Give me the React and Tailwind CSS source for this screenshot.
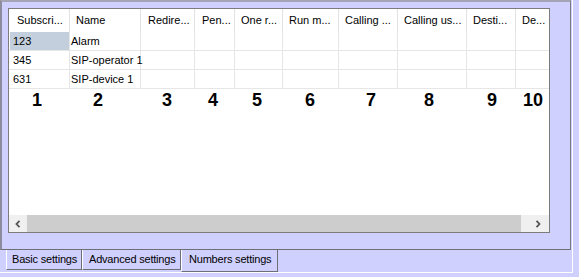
import React from 'react';

const columns = [
  { label: 'Subscri...', width: 'w-[61px]', head: 'pl-[8px]' },
  { label: 'Name', width: 'w-[71px]', head: 'pl-[6px]' },
  { label: 'Redire...', width: 'w-[54px]', head: 'pl-[7px]' },
  { label: 'Pen...', width: 'w-[40px]', head: 'pl-[7px]' },
  { label: 'One r...', width: 'w-[48px]', head: 'pl-[6px]' },
  { label: 'Run m...', width: 'w-[56px]', head: 'pl-[6px]' },
  { label: 'Calling ...', width: 'w-[59px]', head: 'pl-[6px]' },
  { label: 'Calling us...', width: 'w-[69px]', head: 'pl-[6px]' },
  { label: 'Desti...', width: 'w-[49px]', head: 'pl-[6px]' },
  { label: 'De...', width: 'w-[33px]', head: 'pl-[6px]' },
];

const rows = [
  { number: '123', name: 'Alarm', selected: true },
  { number: '345', name: 'SIP-operator 1' },
  { number: '631', name: 'SIP-device 1' },
];

const Chevron = ({ left }) => (
  <svg width="6" height="8" viewBox="0 0 6 8" className="block">
    <path
      d={left ? 'M4.5 0.8 L1.5 4 L4.5 7.2' : 'M1.5 0.8 L4.5 4 L1.5 7.2'}
      fill="none"
      stroke="#555555"
      strokeWidth="1.8"
    />
  </svg>
);

const App = () => {
  return (
    <div
      className="w-[579px] h-[277px] bg-[#d0d0ff] overflow-hidden text-[11px] text-black"
      style={{ fontFamily: '"Liberation Sans", Arial, sans-serif' }}
    >
      <div className="w-[573px] h-[273px] border-r border-b border-white flex flex-col">
        {/* Tab page */}
        <div className="w-[571px] h-[251px] border-t-2 border-l-2 border-t-[#a4a4b4] border-l-[#8c8c9c] border-r border-b border-r-[#7a7a82] border-b-[#6e6e78] pt-[6px] pl-[6px] pr-[20px] pb-[16px]">
          <div className="w-full h-full border border-[#7c7c7c] bg-white flex flex-col">
            {/* Grid */}
            <div className="flex-1">
              <div className="flex h-[23px]">
                {columns.map((col, i) => (
                  <div
                    key={col.label}
                    className={`${col.width} ${col.head} shrink-0 flex items-center whitespace-nowrap overflow-hidden ${
                      i < columns.length - 1 ? 'border-r border-[#e2e2e2]' : ''
                    }`}
                  >
                    {col.label}
                  </div>
                ))}
              </div>
              {rows.map((row) => (
                <div key={row.number} className="flex h-[19px] border-b border-[#e6e6e6]">
                  {columns.map((col, i) => (
                    <div
                      key={col.label}
                      className={`${col.width} shrink-0 flex items-center whitespace-nowrap ${
                        i < columns.length - 1 ? 'border-r border-[#e6e6e6]' : ''
                      }`}
                    >
                      {i === 0 && (
                        <div
                          className={`w-full h-full flex items-center pl-[3px] ml-[1px] ${
                            row.selected ? 'bg-[#c3cfdc]' : ''
                          }`}
                        >
                          {row.number}
                        </div>
                      )}
                      {i === 1 && <span className="pl-[1px]">{row.name}</span>}
                    </div>
                  ))}
                </div>
              ))}
              {/* Column numbers */}
              <div className="flex mt-[2px] text-[18px] font-bold leading-[18px]">
                <span className="w-[20px] text-center ml-[18px]">1</span>
                <span className="w-[20px] text-center ml-[41px]">2</span>
                <span className="w-[20px] text-center ml-[49px]">3</span>
                <span className="w-[20px] text-center ml-[26px]">4</span>
                <span className="w-[20px] text-center ml-[24px]">5</span>
                <span className="w-[20px] text-center ml-[33px]">6</span>
                <span className="w-[20px] text-center ml-[41px]">7</span>
                <span className="w-[20px] text-center ml-[38px]">8</span>
                <span className="w-[20px] text-center ml-[43px]">9</span>
                <span className="w-[22px] text-center ml-[20px]">10</span>
              </div>
            </div>
            {/* Horizontal scrollbar */}
            <div className="h-[17px] flex">
              <div className="w-[18px] bg-[#f0f0f0] flex items-center justify-center">
                <Chevron left />
              </div>
              <div className="flex-1 bg-[#cdcdcd]" />
              <div className="w-[28px] bg-[#f0f0f0] flex items-center justify-end pr-[8px]">
                <Chevron />
              </div>
            </div>
          </div>
        </div>
        {/* Tabs */}
        <div className="flex items-start pl-[6px] tracking-[-0.2px]">
          <div className="w-[76px] h-[20px] border-l border-l-white border-r border-b border-r-[#6e6e78] border-b-[#6e6e78] pl-[5px] flex items-center whitespace-nowrap">
            Basic settings
          </div>
          <div className="w-[99px] h-[20px] border-l border-l-white border-r border-b border-r-[#6e6e78] border-b-[#6e6e78] pl-[6px] flex items-center whitespace-nowrap">
            Advanced settings
          </div>
          <div className="w-[97px] h-[22px] border-l border-l-white border-r border-b border-r-[#6e6e78] border-b-[#6e6e78] pl-[7px] pb-[2px] flex items-center whitespace-nowrap">
            Numbers settings
          </div>
        </div>
      </div>
    </div>
  );
};

export default App;
